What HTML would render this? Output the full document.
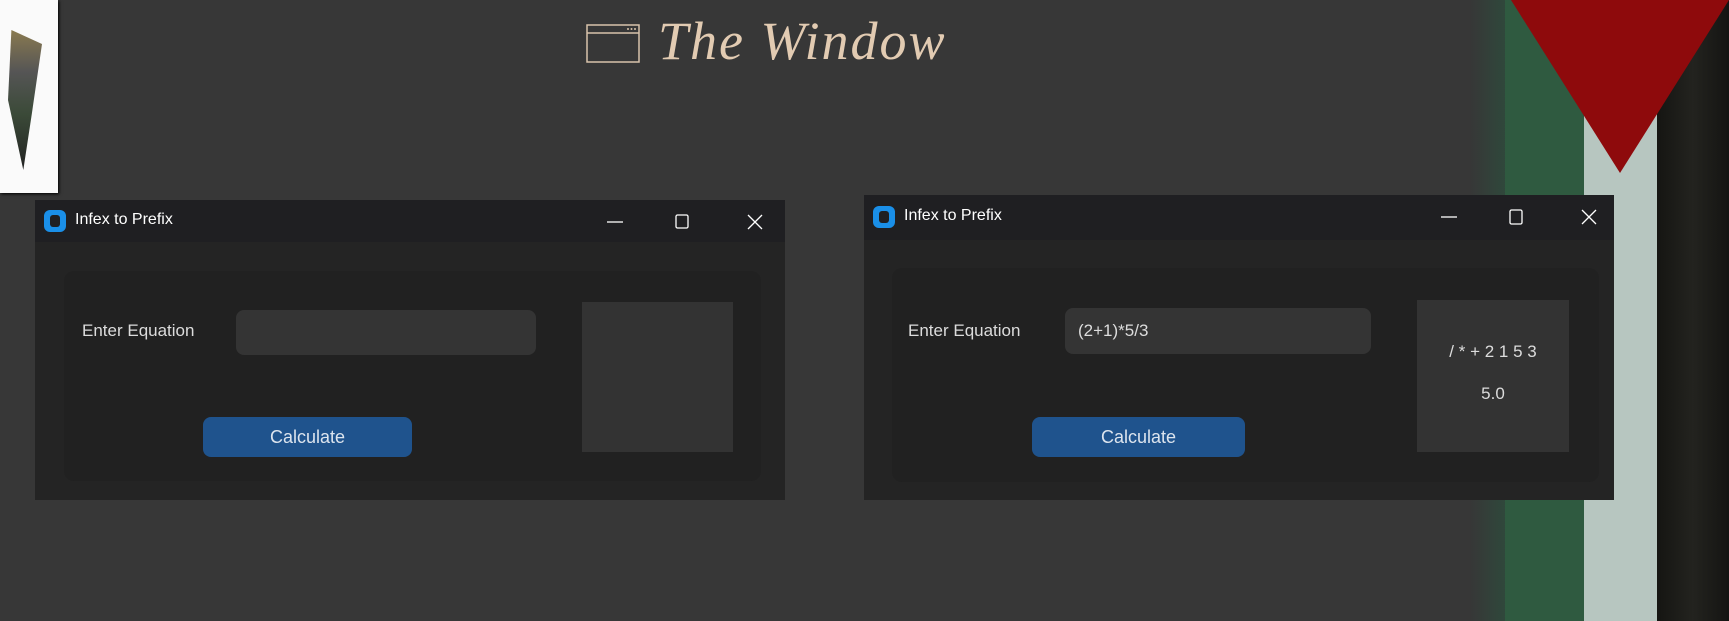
<!DOCTYPE html>
<html><head><style>
*{margin:0;padding:0;box-sizing:border-box}
body{width:1729px;height:621px;overflow:hidden;background:#373737;position:relative;font-family:"Liberation Sans",sans-serif}
.abs{position:absolute}
.win{position:absolute;background:#242424}
.tb{position:absolute;left:0;top:0;right:0;height:42px;background:#1f1f22}
.tt{position:absolute;left:40px;top:11px;color:#fff;font-size:16px}
.ic{position:absolute;left:9px;top:10px;width:22px;height:22px;border-radius:6px;background:#1a8fe8}
.ic:after{content:"";position:absolute;left:6px;top:5px;width:10px;height:12px;border-radius:3px;background:#1f1f22}
.frame{position:absolute;background:#212121;border-radius:10px}
.lbl{position:absolute;color:#dcdcdc;font-size:17px}
.entry{position:absolute;background:#343434;border-radius:8px;color:#dcdcdc;font-size:17px;padding-left:13px;display:flex;align-items:center}
.btn{position:absolute;background:#1f538d;border-radius:8px;color:#dce4ee;font-size:18px;display:flex;align-items:center;justify-content:center}
.out{position:absolute;background:#333;color:#dcdcdc;font-size:17px;text-align:center}
</style></head><body>
<div class="abs" style="left:1470px;top:0;width:40px;height:621px;background:linear-gradient(90deg,#373737,#2e4a3c)"></div>
<div class="abs" style="left:1505px;top:0;width:80px;height:621px;background:#2f5a40"></div>
<div class="abs" style="left:1584px;top:0;width:73px;height:621px;background:#b7c6c0"></div>
<div class="abs" style="left:1657px;top:0;width:72px;height:621px;background:linear-gradient(90deg,#151512,#23231f,#141412)"></div>
<svg class="abs" style="left:0;top:0" width="1729" height="621"><polygon points="1511,0 1729,0 1620,173" fill="#8e0a0c"/></svg>
<div class="abs" style="left:0;top:0;width:58px;height:193px;background:#fafafa;box-shadow:1px 1px 3px #000"></div>
<div class="abs" style="left:8px;top:30px;width:34px;height:140px;background:linear-gradient(#8a7a50,#555 30%,#3b4a38 60%,#222);clip-path:polygon(10% 0,100% 10%,70% 60%,45% 100%,0 50%)"></div>
<svg class="abs" style="left:586px;top:24px" width="56" height="40"><rect x="1" y="1" width="52" height="37" fill="none" stroke="#d9c3ab" stroke-width="1.5"/><line x1="1" y1="9" x2="53" y2="9" stroke="#d9c3ab" stroke-width="1.5"/><circle cx="42" cy="5" r="1" fill="#d9c3ab"/><circle cx="45.5" cy="5" r="1" fill="#d9c3ab"/><circle cx="49" cy="5" r="1" fill="#d9c3ab"/></svg>
<div class="abs" style="left:658px;top:10px;font-family:'Liberation Serif',serif;font-style:italic;font-size:54px;letter-spacing:2px;color:#e2cbb2">The Window</div>
<div class="win" style="left:35px;top:200px;width:750px;height:300px">
 <div class="tb"><div class="ic"></div><div class="tt">Infex to Prefix</div>
 <svg class="abs" style="left:570px;top:12px" width="170" height="20"><line x1="2" y1="10" x2="18" y2="10" stroke="#fff" stroke-width="1.3"/><rect x="71" y="3" width="12" height="13" rx="1.5" fill="none" stroke="#fff" stroke-width="1.3"/><path d="M143 3 L157 17 M157 3 L143 17" stroke="#fff" stroke-width="1.3"/></svg></div>
 <div class="frame" style="left:29px;top:71px;width:697px;height:210px"></div>
 <div class="lbl" style="left:47px;top:121px">Enter Equation</div>
 <div class="entry" style="left:201px;top:110px;width:300px;height:45px"></div>
 <div class="btn" style="left:168px;top:217px;width:209px;height:40px">Calculate</div>
 <div class="out" style="left:547px;top:102px;width:151px;height:150px"></div>
</div>
<div class="win" style="left:864px;top:195px;width:750px;height:305px">
 <div class="tb" style="height:45px"><div class="ic" style="top:11px"></div><div class="tt" style="top:12px">Infex to Prefix</div>
 <svg class="abs" style="left:575px;top:12px" width="170" height="20"><line x1="2" y1="10" x2="18" y2="10" stroke="#fff" stroke-width="1.3"/><rect x="71" y="3" width="12" height="14" rx="1.5" fill="none" stroke="#fff" stroke-width="1.3"/><path d="M143 3 L157 17 M157 3 L143 17" stroke="#fff" stroke-width="1.3"/></svg></div>
 <div class="frame" style="left:28px;top:73px;width:707px;height:214px"></div>
 <div class="lbl" style="left:44px;top:126px">Enter Equation</div>
 <div class="entry" style="left:201px;top:113px;width:306px;height:46px">(2+1)*5/3</div>
 <div class="btn" style="left:168px;top:222px;width:213px;height:40px">Calculate</div>
 <div class="out" style="left:553px;top:105px;width:152px;height:152px"><div style="margin-top:42px">/ * + 2 1 5 3</div><div style="margin-top:22px">5.0</div></div>
</div>
</body></html>
